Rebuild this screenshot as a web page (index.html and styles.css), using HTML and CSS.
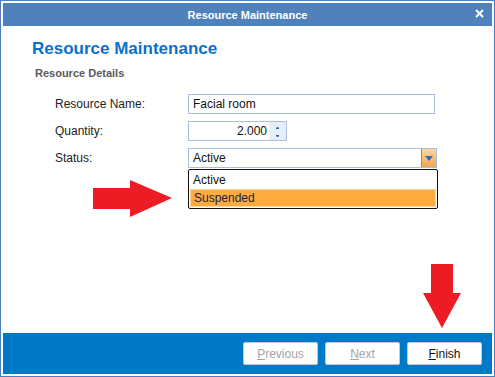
FILE: index.html
```html
<!DOCTYPE html>
<html lang="en">
<head>
    <meta charset="UTF-8">
    <title>Resource Maintenance</title>
    <link rel="stylesheet" href="styles.css">
</head>
<body>

<div class="window">
    <!-- Title bar -->
    <div class="titlebar">
        <span class="title">Resource Maintenance</span>
        <svg class="close" width="9" height="9" viewBox="0 0 9 9">
            <path d="M1 1l7 7M8 1L1 8" stroke="white" stroke-width="2"/>
        </svg>
    </div>

    <div class="main">
        <h1>Resource Maintenance</h1>
        <h2>Resource Details</h2>

        <div class="form">
            <label>Resource Name:</label>
            <div class="field name-field">Facial room</div>

            <label>Quantity:</label>
            <div class="field qty-field">
                <span class="qty-value">2.000</span>
                <span class="spinner">
                    <svg width="17" height="20" viewBox="0 0 17 20">
                        <path d="M7 6.5h3M7.5 5.5h2" stroke="#3a66a8" stroke-width="1"/>
                        <path d="M7 13.5h3M7.5 14.5h2" stroke="#3a66a8" stroke-width="1"/>
                    </svg>
                </span>
            </div>

            <label>Status:</label>
            <div class="field status-field">
                <span>Active</span>
                <span class="drop-btn">
                    <svg width="8" height="5" viewBox="0 0 8 5"><path d="M0 0h8L4 5z" fill="#3b67b0"/></svg>
                </span>
                <ul class="drop-list">
                    <li>Active</li>
                    <li class="selected">Suspended</li>
                </ul>
            </div>
        </div>

        <!-- annotation arrows -->
        <svg class="arrow-right" width="82" height="38" viewBox="0 0 82 38">
            <path d="M1 8h37V0l42 18L38 37V29H1z" fill="#ed1c24"/>
        </svg>
        <svg class="arrow-down" width="39" height="64" viewBox="0 0 39 64">
            <path d="M8 0h22v29h8L19 64L0 29h8z" fill="#ed1c24"/>
        </svg>
    </div>

    <div class="footer">
        <button class="disabled"><u>P</u>revious</button>
        <button class="disabled"><u>N</u>ext</button>
        <button><u>F</u>inish</button>
    </div>
</div>

</body>
</html>
```

FILE: styles.css
```css
/* General styles */
body {
    margin: 0;
    padding: 0;
    font-family: "Liberation Sans", Arial, sans-serif;
    background-color: white;
}

.window {
    width: 495px;
    height: 377px;
    box-sizing: border-box;
    border: 1px solid #4a7ec4;
    padding: 2px;
    display: flex;
    flex-direction: column;
    background-color: white;
}

/* Title bar */
.titlebar {
    height: 23px;
    background-color: #4f81bd;
    display: flex;
    align-items: center;
    justify-content: center;
    position: relative;
    color: white;
}

.titlebar .title {
    font-size: 11px;
    font-weight: bold;
}

.titlebar .close {
    position: absolute;
    right: 8px;
    top: 6px;
}

/* Main area */
.main {
    flex: 1;
    position: relative;
    padding: 13px 0 0 29px;
}

h1 {
    margin: 0;
    font-size: 17px;
    font-weight: bold;
    color: #0b70cc;
    line-height: 20px;
}

h2 {
    margin: 7px 0 0 3px;
    font-size: 11px;
    font-weight: bold;
    color: #5a5a5a;
    line-height: 14px;
}

/* Form grid */
.form {
    display: grid;
    grid-template-columns: 133px 249px;
    row-gap: 7px;
    margin: 14px 0 0 23px;
    font-size: 12px;
}

.form label {
    line-height: 20px;
    color: #222;
}

.field {
    height: 20px;
    box-sizing: border-box;
    border: 1px solid #a8bfdf;
    display: flex;
    align-items: center;
    padding-left: 4px;
    color: #111;
    background-color: white;
}

.name-field {
    width: 247px;
}

.qty-field {
    width: 99px;
    padding-left: 0;
    justify-content: flex-end;
}

.qty-value {
    padding-right: 2px;
}

.spinner {
    width: 17px;
    height: 18px;
    background-color: #e6eef9;
    display: flex;
}

.spinner svg {
    display: block;
}

.status-field {
    width: 249px;
    position: relative;
    justify-content: space-between;
    padding-right: 0;
}

.drop-btn {
    width: 14px;
    height: 18px;
    border-left: 1px solid #b08a52;
    background: linear-gradient(#fbd7a0, #f5a74c);
    display: flex;
    align-items: center;
    justify-content: center;
}

/* Dropdown list */
.drop-list {
    position: absolute;
    left: -1px;
    top: 20px;
    width: 250px;
    box-sizing: border-box;
    margin: 0;
    padding: 1px;
    list-style: none;
    border: 1px solid #111;
    border-radius: 2px;
    background-color: white;
}

.drop-list li {
    height: 18px;
    line-height: 18px;
    padding-left: 3px;
}

.drop-list li.selected {
    background-color: #ffab40;
    border: 1px solid #f7d29c;
    height: 16px;
    line-height: 16px;
    color: #1d1d3a;
}

/* Arrows */
.arrow-right {
    position: absolute;
    left: 89px;
    top: 154px;
}

.arrow-down {
    position: absolute;
    left: 420px;
    top: 238px;
}

/* Footer */
.footer {
    height: 41px;
    background-color: #0078c8;
    display: flex;
    justify-content: flex-end;
    align-items: center;
    gap: 7px;
    padding-right: 10px;
}

.footer button {
    width: 75px;
    height: 23px;
    background-color: white;
    border: 1px solid #c9c9c9;
    border-radius: 2px;
    font-family: "Liberation Sans", Arial, sans-serif;
    font-size: 12px;
    color: #111;
    padding: 0;
}

.footer button.disabled {
    color: #a3a3a3;
}
```
